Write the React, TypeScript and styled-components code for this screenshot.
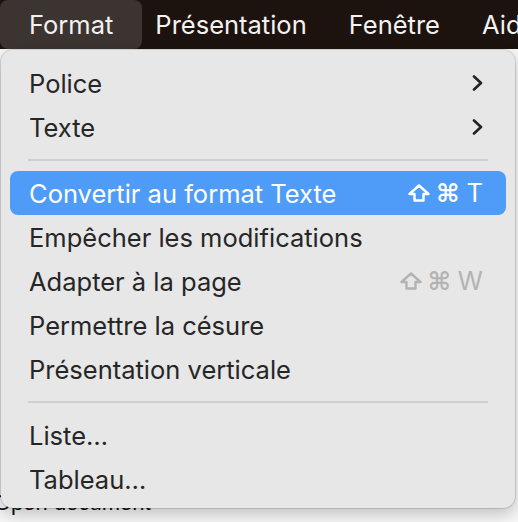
import React from "react";
import styled, { createGlobalStyle } from "styled-components";

const Global = createGlobalStyle`
  html, body { margin: 0; padding: 0; }
  body {
    background: #f6f6f6;
    font-family: Inter, "Noto Sans", "DejaVu Sans", sans-serif;
    overflow: hidden;
  }
`;

const Page = styled.div`
  position: relative;
  width: 518px;
  height: 522px;
  display: flex;
  flex-direction: column;
  overflow: hidden;
`;

const MenuBar = styled.div`
  height: 49px;
  flex: none;
  display: flex;
  align-items: stretch;
  background: #1c130f;
  color: #f4f2f0;
  font-size: 25.5px;
`;

const MenuTitle = styled.div<{ $active?: boolean }>`
  display: flex;
  align-items: center;
  padding: 0 ${(p) => (p.$active ? "29px" : "21px")};
  margin-right: ${(p) => (p.$active ? "-8px" : "0")};
  border-radius: 8px;
  background: ${(p) => (p.$active ? "#3b3431" : "transparent")};
  white-space: nowrap;
`;

const Document = styled.div`
  flex: 1;
  display: flex;
  align-items: flex-end;
  padding-bottom: 6px;
`;

const DocText = styled.div`
  margin-left: -6px;
  font-family: "Liberation Sans", Arial, sans-serif;
  font-size: 22px;
  line-height: 26px;
  color: #111;
`;

const Panel = styled.div`
  position: absolute;
  top: 50px;
  left: 1px;
  width: 514px;
  height: 458px;
  box-sizing: border-box;
  padding: 11px 9px 8px;
  background: #e7e7e7;
  border-radius: 12px;
  box-shadow: 0 0 0 1px rgba(0, 0, 0, 0.12), 0 6px 16px rgba(0, 0, 0, 0.22);
  display: flex;
  flex-direction: column;
`;

const Row = styled.div<{ $selected?: boolean }>`
  height: 44px;
  flex: none;
  display: flex;
  align-items: center;
  justify-content: space-between;
  padding: 0 23px 0 19px;
  border-radius: 8px;
  font-size: 25.5px;
  color: ${(p) => (p.$selected ? "#ffffff" : "#262626")};
  background: ${(p) => (p.$selected ? "#4f9cf8" : "transparent")};
`;

const Label = styled.span`
  white-space: nowrap;
`;

const Separator = styled.div`
  height: 22px;
  flex: none;
  display: flex;
  align-items: center;
  padding: 0 18px;
  &::after {
    content: "";
    flex: 1;
    height: 2px;
    background: #cfcfcf;
  }
`;

const Shortcut = styled.span<{ $dim?: boolean }>`
  display: flex;
  align-items: center;
  gap: 6px;
  color: ${(p) => (p.$dim ? "#b3b3b3" : "inherit")};
`;

const Cmd = styled.span`
  font-family: "DejaVu Sans", sans-serif;
  font-size: 25px;
  font-weight: bold;
  line-height: 1;
`;

const Key = styled.span`
  margin-left: 1px;
  font-size: 25.5px;
  line-height: 1;
`;

const Chevron = () => (
  <svg width="11" height="16" viewBox="0 0 11 16">
    <path d="M2 1.5 L9 8 L2 14.5" fill="none" stroke="#222" strokeWidth="2.6" strokeLinecap="round" strokeLinejoin="round" />
  </svg>
);

const ShiftIcon = () => (
  <svg width="22" height="18" viewBox="0 0 22 18">
    <path
      d="M11 1.5 L20.5 10 L15.5 10 L15.5 16.5 L6.5 16.5 L6.5 10 L1.5 10 Z"
      fill="none"
      stroke="currentColor"
      strokeWidth="2.4"
      strokeLinejoin="round"
    />
  </svg>
);

const ShortcutKeys = ({ k, dim }: { k: string; dim?: boolean }) => (
  <Shortcut $dim={dim}>
    <ShiftIcon />
    <Cmd>⌘</Cmd>
    <Key>{k}</Key>
  </Shortcut>
);

export default function App() {
  return (
    <Page>
      <Global />
      <MenuBar>
        <MenuTitle $active>Format</MenuTitle>
        <MenuTitle>Présentation</MenuTitle>
        <MenuTitle>Fenêtre</MenuTitle>
        <MenuTitle>Aide</MenuTitle>
      </MenuBar>
      <Document>
        <DocText>Open document</DocText>
      </Document>
      <Panel>
        <Row>
          <Label>Police</Label>
          <Chevron />
        </Row>
        <Row>
          <Label>Texte</Label>
          <Chevron />
        </Row>
        <Separator />
        <Row $selected>
          <Label>Convertir au format Texte</Label>
          <ShortcutKeys k="T" />
        </Row>
        <Row>
          <Label>Empêcher les modifications</Label>
        </Row>
        <Row>
          <Label>Adapter à la page</Label>
          <ShortcutKeys k="W" dim />
        </Row>
        <Row>
          <Label>Permettre la césure</Label>
        </Row>
        <Row>
          <Label>Présentation verticale</Label>
        </Row>
        <Separator />
        <Row>
          <Label>Liste…</Label>
        </Row>
        <Row>
          <Label>Tableau…</Label>
        </Row>
      </Panel>
    </Page>
  );
}
